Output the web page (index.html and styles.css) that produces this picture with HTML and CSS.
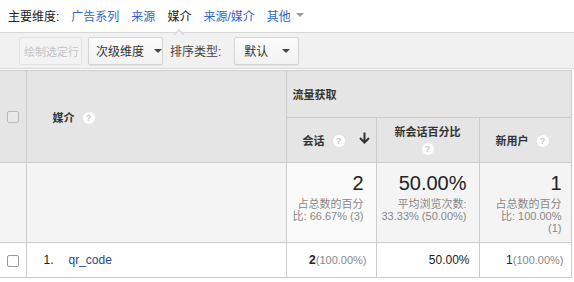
FILE: index.html
```html
<!DOCTYPE html>
<html lang="zh">
<head>
<meta charset="utf-8">
<link rel="stylesheet" href="styles.css">
</head>
<body>
<div class="tabs">
  <span class="label">主要维度:</span>
  <a class="tab">广告系列</a>
  <a class="tab">来源</a>
  <span class="tab current">媒介</span>
  <a class="tab">来源/媒介</a>
  <a class="tab">其他<span class="caret light"></span></a>
</div>
<div class="toolbar">
  <button class="btn disabled">绘制选定行</button>
  <button class="btn">次级维度<span class="caret"></span></button>
  <span class="sortlabel">排序类型:</span>
  <button class="btn wide">默认<span class="caret"></span></button>
</div>
<table class="grid">
  <colgroup>
    <col class="c-check"><col class="c-dim"><col class="c-s"><col class="c-p"><col class="c-n">
  </colgroup>
  <thead>
    <tr class="h1">
      <th rowspan="2" class="check"><span class="box"></span></th>
      <th rowspan="2" class="dim">媒介<span class="help">?</span></th>
      <th colspan="3" class="group">流量获取</th>
    </tr>
    <tr class="h2">
      <th class="sorted"><span class="hl">会话<span class="help">?</span></span><span class="arrow"><svg width="11" height="12" viewBox="0 0 11 12"><path d="M5.5 0.5v10M1 6l4.5 4.5L10 6" fill="none" stroke="#333" stroke-width="2"/></svg></span></th>
      <th class="center">新会话百分比<br><span class="help">?</span></th>
      <th class="plain">新用户<span class="help">?</span></th>
    </tr>
  </thead>
  <tbody>
    <tr class="summary">
      <td class="check"></td>
      <td class="dim"></td>
      <td class="num sortedcol"><div class="big">2</div><div class="sub">占总数的百分比: 66.67% (3)</div></td>
      <td class="num"><div class="big">50.00%</div><div class="sub">平均浏览次数: 33.33% (50.00%)</div></td>
      <td class="num last"><div class="big">1</div><div class="sub">占总数的百分比: 100.00% (1)</div></td>
    </tr>
    <tr class="data">
      <td class="check"><span class="box white"></span></td>
      <td class="dim"><span class="idx">1.</span><a class="link">qr_code</a></td>
      <td class="val"><b>2</b><span class="pct">(100.00%)</span></td>
      <td class="val">50.00%</td>
      <td class="val">1<span class="pct">(100.00%)</span></td>
    </tr>
  </tbody>
</table>
</body>
</html>
```
FILE: styles.css
```css
* { box-sizing: border-box; }
body {
  margin: 0;
  background: #fff;
  font-family: "Liberation Sans", Arial, "Noto Sans CJK SC", sans-serif;
  font-size: 12px;
  color: #222;
}
.tabs {
  height: 33px;
  border-bottom: 1px solid #d6d6d6;
  display: flex;
  align-items: center;
  padding: 0 0 2px 8px;
}
.label { margin-right: 12px; color: #222; }
.tab {
  color: #3366cc;
  margin-right: 12px;
  position: relative;
  display: inline-flex;
  align-items: center;
  cursor: pointer;
}
.tab.current { color: #222; }
.tab.current::before,
.tab.current::after {
  content: "";
  position: absolute;
  left: 50%;
  width: 0; height: 0;
  border-style: solid;
  border-color: transparent;
}
.tab.current::before {
  bottom: -11px;
  margin-left: -6px;
  border-width: 0 6px 6px 6px;
  border-bottom-color: #d6d6d6;
}
.tab.current::after {
  bottom: -12px;
  margin-left: -5px;
  border-width: 0 5px 5px 5px;
  border-bottom-color: #f1f1f1;
}
.caret {
  display: inline-block;
  width: 0; height: 0;
  border-left: 4px solid transparent;
  border-right: 4px solid transparent;
  border-top: 4px solid #444;
  margin-left: 10px;
}
.caret.light { border-top-color: #999; margin-left: 5px; }
.toolbar {
  height: 36px;
  background: #f1f1f1;
  border-bottom: 1px solid #dadada;
  display: flex;
  align-items: center;
  padding: 0 0 0 19px;
}
.btn {
  height: 28px;
  font-family: inherit;
  font-size: 12px;
  color: #333;
  background: linear-gradient(#fbfbfb, #f2f2f2);
  border: 1px solid #d3d3d3;
  border-radius: 2px;
  box-shadow: 0 1px 1px rgba(0,0,0,0.06);
  padding: 0 0 0 7px;
  display: inline-flex;
  align-items: center;
  margin-right: 6px;
  width: 75px;
  white-space: nowrap;
  justify-content: flex-start;
}
.btn.disabled {
  width: 63px;
  font-size: 11px;
  color: #c3c3c3;
  background: #f3f3f3;
  border-color: #e2e2e2;
  box-shadow: none;
  padding: 0 0 0 4px;
}
.btn.wide { width: 65px; padding: 0 0 0 9px; }
.btn.wide .caret { margin-left: 14px; }
.sortlabel { color: #444; margin: 0 13px 0 1px; white-space: nowrap; }
.grid {
  border-collapse: collapse;
  table-layout: fixed;
  width: 571px;
  margin-top: 1px;
}
.c-check { width: 26px; }
.c-dim { width: 260px; }
.c-s { width: 90px; }
.c-p { width: 103px; }
.c-n { width: 92px; }
.grid th, .grid td {
  border: 1px solid #cccccc;
  padding: 0;
}
.grid th:first-child, .grid td:first-child { border-left: none; }
.grid thead th {
  background: #e5e5e5;
  font-size: 11px;
  font-weight: bold;
  color: #333;
  text-align: left;
}
.h1 { height: 47px; }
.h2 { height: 45px; }
.grid th.check, .grid td.check { text-align: center; vertical-align: middle; }
.box {
  display: inline-block;
  width: 12px; height: 12px;
  border: 1px solid #b9b9b9;
  border-radius: 2px;
  background: #e9e9e9;
  vertical-align: middle;
}
.box.white { background: #fff; border-color: #999; }
.grid th.dim { padding-left: 26px; }
.grid th.group { padding-left: 6px; }
.help {
  display: inline-block;
  width: 12px; height: 12px;
  border-radius: 50%;
  background: #fff;
  color: #c4c4c4;
  font-size: 9px;
  font-weight: bold;
  line-height: 12px;
  text-align: center;
  margin-left: 8px;
  vertical-align: 1px;
}
.grid th.sorted { padding: 0 6px 0 16px; }
.hl { display: inline-block; }
.arrow { float: right; }
.grid th.center { text-align: center; line-height: 17px; padding-top: 1px; }
.grid th.center .help { margin-left: 0; margin-top: 2px; }
.grid th.plain { padding-left: 16px; }
.summary { height: 80px; }
.summary td { background: #f4f4f4; vertical-align: top; }
.summary td.sortedcol { background: #fafafa; }
.grid td.num { text-align: right; padding: 9px 12px 0 2px; }
.grid td.num.last { padding: 9px 9px 0 14px; }
.big { font-size: 20px; color: #222; line-height: 22px; }
.sub { font-size: 11px; color: #888; line-height: 12px; margin-top: 4px; }
.data { height: 35px; }
.data td { background: #fff; vertical-align: middle; }
.data td.dim { padding-left: 17px; }
.idx { display: inline-block; width: 25px; color: #222; }
.link { color: #1a4b8c; cursor: pointer; }
.grid td.val { text-align: right; padding-right: 9px; font-size: 12px; color: #222; }
.grid td.val:last-child { padding-right: 7px; }
.val b { font-weight: bold; }
.pct { font-size: 11px; color: #888; }
```
